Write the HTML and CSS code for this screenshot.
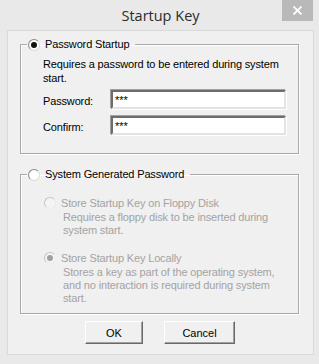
FILE: index.html
```html
<!DOCTYPE html>
<html lang="en">

<head>
    <meta charset="UTF-8">
    <title>Startup Key</title>
    <link rel="stylesheet" href="styles.css">
</head>

<body>
    <div class="window">
        <div class="title-bar">
            <span class="title">Startup Key</span>
            <button class="close-btn" aria-label="Close">
                <svg width="11" height="9" viewBox="0 0 11 9">
                    <path d="M1.5 0.5 L9.5 8.5 M9.5 0.5 L1.5 8.5" stroke="#fff" stroke-width="1.8" />
                </svg>
            </button>
        </div>

        <div class="client">
            <fieldset class="group">
                <legend>
                    <span class="radio checked"></span>
                    <span>Password Startup</span>
                </legend>
                <p class="desc">Requires a password to be entered during system start.</p>
                <div class="field-row first">
                    <label>Password:</label>
                    <input type="text" value="***" readonly>
                </div>
                <div class="field-row">
                    <label>Confirm:</label>
                    <input type="text" value="***" readonly>
                </div>
            </fieldset>

            <fieldset class="group second">
                <legend>
                    <span class="radio"></span>
                    <span>System Generated Password</span>
                </legend>
                <div class="option disabled">
                    <div class="option-title">
                        <span class="radio"></span>
                        <span>Store Startup Key on Floppy Disk</span>
                    </div>
                    <p class="option-desc">Requires a floppy disk to be inserted during system start.</p>
                </div>
                <div class="option disabled">
                    <div class="option-title">
                        <span class="radio checked"></span>
                        <span>Store Startup Key Locally</span>
                    </div>
                    <p class="option-desc">Stores a key as part of the operating system, and no interaction is required during system start.</p>
                </div>
            </fieldset>

            <div class="buttons">
                <button class="dlg-btn ok">OK</button>
                <button class="dlg-btn cancel">Cancel</button>
            </div>
        </div>
    </div>
</body>

</html>
```

FILE: styles.css
```css
/* Reset */
* {
    margin: 0;
    padding: 0;
    box-sizing: border-box;
}

body {
    font-family: 'Liberation Sans', Arial, sans-serif;
    font-size: 11px;
    letter-spacing: -0.15px;
    color: #000;
    background-color: #e9e9e9;
}

/* Window frame */
.window {
    width: 319px;
    height: 364px;
    display: flex;
    flex-direction: column;
    background-color: #e9e9e9;
}

.title-bar {
    height: 30px;
    display: flex;
    justify-content: center;
    align-items: center;
    position: relative;
}

.title {
    font-family: 'Open Sans', sans-serif;
    font-size: 14.5px;
    letter-spacing: 0;
    color: #2b2b2b;
    margin-left: 2px;
}

.close-btn {
    position: absolute;
    top: 0;
    left: 282px;
    width: 31px;
    height: 21px;
    border: none;
    background-color: #b9b9b9;
    display: flex;
    justify-content: center;
    align-items: center;
}

/* Client area */
.client {
    margin: 0 5px 0 7px;
    height: 325px;
    border: 1px solid #d9d9d9;
    background-color: #f0f0f0;
    padding: 7px 14px 0 12px;
}

.group {
    border: 1px solid #a9a9a9;
    box-shadow: 1px 1px 0 #fff, inset 1px 1px 0 #fff;
    padding: 0 0 0 22px;
    height: 116px;
}

.group legend {
    display: flex;
    align-items: center;
    margin-left: -16px;
    padding: 0 6px 0 1px;
    height: 13px;
    line-height: 13px;
}

.radio {
    display: inline-block;
    width: 12px;
    height: 12px;
    border-radius: 50%;
    border: 1px solid #8a8a8a;
    border-right-color: #dcdcdc;
    border-bottom-color: #dcdcdc;
    background: radial-gradient(circle at 55% 55%, #fff 55%, #e6e6e6 100%);
    margin-right: 5px;
    position: relative;
}

.radio.checked::after {
    content: "";
    position: absolute;
    left: 2px;
    top: 2px;
    width: 6px;
    height: 6px;
    border-radius: 50%;
    background-color: #111;
}

.desc {
    margin-top: 6px;
    line-height: 14px;
    width: 250px;
}

.field-row {
    display: flex;
    align-items: center;
    margin-top: 7px;
}

.field-row.first {
    margin-top: 5px;
}

.field-row label {
    width: 68px;
    padding-top: 3px;
}

.field-row input {
    width: 175px;
    height: 19px;
    font-family: 'Liberation Sans', Arial, sans-serif;
    font-size: 11px;
    padding: 0 2px;
    background-color: #fff;
    border: 2px solid;
    border-color: #6d6d6d #e3e3e3 #e3e3e3 #6d6d6d;
    box-shadow: -1px -1px 0 #a0a0a0, 1px 1px 0 #fff;
    outline: none;
}

/* Second group */
.group.second {
    margin-top: 14px;
    height: 146px;
}

.option {
    margin-left: 1px;
}

.option.disabled {
    color: #a3a3a3;
}

.option.disabled .radio {
    border-color: #c4c4c4 #ececec #ececec #c4c4c4;
    background: #f4f4f4;
}

.option.disabled .radio.checked::after {
    background-color: #a0a0a0;
}

.option-title {
    display: flex;
    align-items: center;
    margin-top: 15px;
    height: 13px;
}

.option + .option .option-title {
    margin-top: 14px;
}

.option-desc {
    margin-left: 19px;
    margin-top: 2px;
    line-height: 13px;
    width: 222px;
}

/* Buttons */
.buttons {
    display: flex;
    margin-top: 7px;
    padding-left: 65px;
    gap: 21px;
}

.dlg-btn {
    height: 23px;
    font-family: 'Liberation Sans', Arial, sans-serif;
    font-size: 11px;
    color: #000;
    background-color: #f0f0f0;
    border: 1px solid;
    border-color: #fff #696969 #696969 #fff;
    box-shadow: inset -1px -1px 0 #a0a0a0;
}

.dlg-btn.ok {
    width: 58px;
}

.dlg-btn.cancel {
    width: 71px;
}
```
